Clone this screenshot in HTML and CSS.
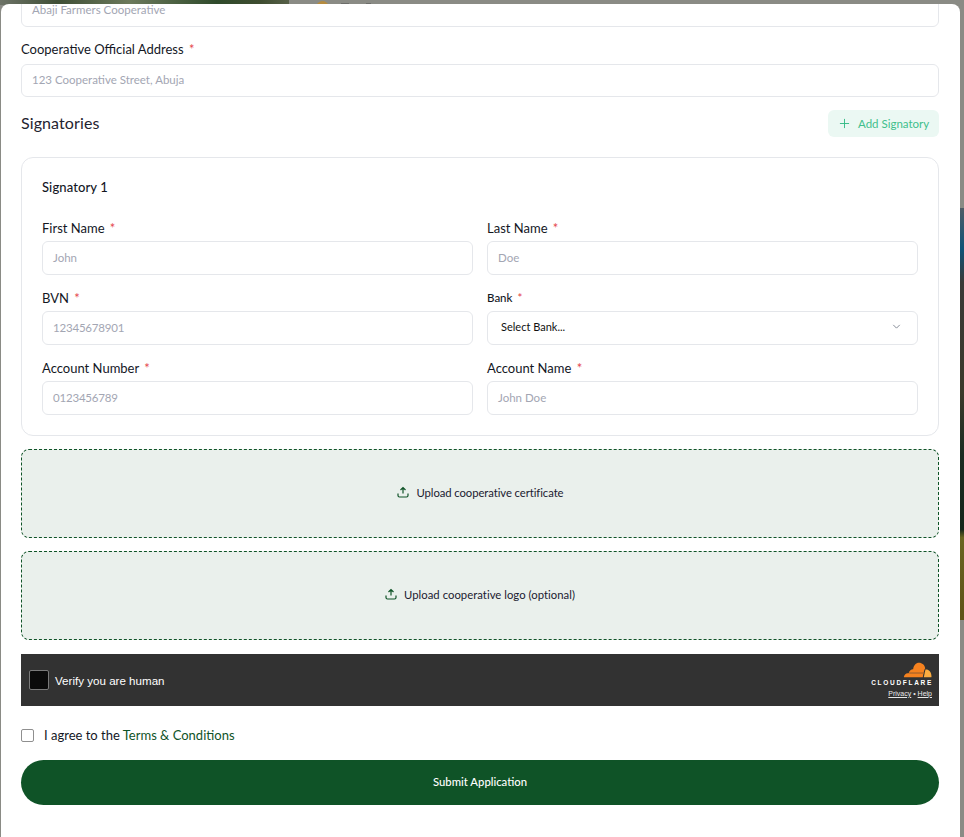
FILE: index.html
```html
<!DOCTYPE html>
<html lang="en">
<head>
<meta charset="utf-8">
<title>Cooperative Application</title>
<link rel="stylesheet" href="styles.css">
</head>
<body>
<div class="backdrop">
  <div class="photo"></div>
  <div class="user-dot"></div>
  <div class="user-name"></div>
  <div class="user-name second"></div>
  <div class="side-photo"></div>
</div>
<main class="modal">
  <div class="field cut">
    <div class="input">Abaji Farmers Cooperative</div>
  </div>
  <div class="field">
    <label class="label">Cooperative Official Address <span class="req">*</span></label>
    <div class="input tall">123 Cooperative Street, Abuja</div>
  </div>
  <div class="section-head">
    <h2 class="section-title">Signatories</h2>
    <button class="add-btn" type="button">
      <svg class="add-icon" viewBox="0 0 24 24" aria-hidden="true"><path d="M12 2v20M2 12h20"/></svg>
      Add Signatory
    </button>
  </div>
  <section class="card">
    <h3 class="card-title">Signatory 1</h3>
    <div class="grid">
      <div class="cell"><label class="label">First Name <span class="req">*</span></label><div class="input box">John</div></div>
      <div class="cell"><label class="label">Last Name <span class="req">*</span></label><div class="input box">Doe</div></div>
      <div class="cell"><label class="label">BVN <span class="req">*</span></label><div class="input box num">12345678901</div></div>
      <div class="cell"><label class="label small">Bank <span class="req">*</span></label>
        <div class="input box select"><span>Select Bank...</span>
          <svg class="chev" viewBox="0 0 24 24" aria-hidden="true"><path d="M6 9l6 6 6-6"/></svg>
        </div>
      </div>
      <div class="cell"><label class="label">Account Number <span class="req">*</span></label><div class="input box num">0123456789</div></div>
      <div class="cell"><label class="label">Account Name <span class="req">*</span></label><div class="input box">John Doe</div></div>
    </div>
  </section>
  <div class="upload">
    <svg class="up-icon" viewBox="0 0 24 24" aria-hidden="true"><path d="M12 15V3M7 8l5-5 5 5M2 15v4a3 3 0 0 0 3 3h14a3 3 0 0 0 3-3v-4"/></svg>
    Upload cooperative certificate
  </div>
  <div class="upload wide">
    <svg class="up-icon" viewBox="0 0 24 24" aria-hidden="true"><path d="M12 15V3M7 8l5-5 5 5M2 15v4a3 3 0 0 0 3 3h14a3 3 0 0 0 3-3v-4"/></svg>
    Upload cooperative logo (optional)
  </div>
  <div class="captcha">
    <div class="cap-left"><span class="cap-box"></span><span class="cap-text">Verify you are human</span></div>
    <div class="cap-right">
      <svg class="cf-logo" viewBox="0 0 60 32" aria-hidden="true">
        <path fill="#f6821f" d="M41 31H3c-1 0-1.500-.5-1-1.500 1-4 4-7 7.500-7 .8 0 1.500.1 2.200.4C13 17 18 14 21 14.500 22 6 27 1 33 1c6.500 0 12 4.800 13 11.500-2.500 3-4 12.500-5 18.500z"/>
        <path fill="#fbad41" d="M46.500 15c6-.8 12.500 4 12.500 15 0 .6-.3 1-.6 1H43c1.500-5 2-11 3.500-16z"/>
        <path fill="#a5622a" d="M13 21h31v2.500H13z"/>
      </svg>
      <span class="cf-word">CLOUDFLARE</span>
      <span class="cf-links"><a class="cf-link">Privacy</a> • <a class="cf-link">Help</a></span>
    </div>
  </div>
  <label class="agree">
    <span class="check"></span>
    <span>I agree to the <span class="terms">Terms &amp; Conditions</span></span>
  </label>
  <button class="submit" type="button">Submit Application</button>
</main>
</body>
</html>
```
FILE: styles.css
```css
* { box-sizing: border-box; }
html, body { margin: 0; height: 837px; overflow: hidden; }
body {
  font-family: "Lato", "Liberation Sans", sans-serif;
  background: #8a8b85;
  position: relative;
  color: #111;
  padding: 4px 4px 0 1px;
}
.backdrop { position: absolute; inset: 0; overflow: hidden; background: #8a8b85; }
.photo {
  position: absolute; left: 0; top: 0; width: 289px; height: 5px;
  background: linear-gradient(90deg, #6d7367, #3f4f36 20%, #6c7a5c 45%, #2f4a2b 75%, #3e4c30 90%, #566048);
}
.user-dot { position: absolute; left: 316px; top: 1px; width: 13px; height: 13px; border-radius: 50%; background: #b58b3f; }
.user-name { position: absolute; left: 341px; top: 3px; width: 8px; height: 2px; background: #6c6d6a; }
.user-name.second { left: 366px; width: 5px; }
.side-photo {
  position: absolute; right: 0; top: 208px; width: 4px; height: 412px;
  background: linear-gradient(#4f5c66, #0f5478 10%, #3a3a38 18%, #3b3a2b 45%, #1b2c22 60%, #15261b 78%, #6a6521 80%, #5f5418 98%);
}
.modal {
  position: relative;
  height: 833px;
  background: #fff;
  border-radius: 8px 8px 0 0;
  padding: 0 21px 0 20px;
  overflow: hidden;
}
.field.cut { margin-top: -11px; }
.label { display: block; font-size: 13px; line-height: 18px; color: #14171f; }
.label.small { font-size: 11.500px; font-weight: 500; }
.req { color: #e5484d; margin-left: 2px; }
.input {
  height: 34px;
  border: 1px solid #e5e7eb;
  border-radius: 6px;
  background: #fff;
  padding: 0 10px 1px;
  display: flex;
  align-items: center;
  font-size: 11.500px;
  color: #a3a6b3;
}
.field + .field { margin-top: 13px; }
.field .label { margin-bottom: 6px; }
.input.tall { height: 33px; padding-bottom: 3px; }
.section-head { display: flex; justify-content: space-between; align-items: center; margin-top: 13px; height: 27px; }
.section-title { margin: 0 0 2px; font-size: 16px; font-weight: 400; color: #1f2430; letter-spacing: 0.1px; }
.add-btn {
  height: 27px; width: 111px;
  border: 0; border-radius: 6px;
  background: #ebf8f3;
  color: #3fbf8c;
  font: inherit; font-size: 11.500px;
  display: flex; align-items: center; gap: 8px;
  padding: 0 0 0 11px;
}
.add-icon { width: 11px; height: 11px; fill: none; stroke: #2fb983; stroke-width: 2; }
.card {
  margin-top: 20px;
  height: 279px;
  border: 1px solid #e5e7eb;
  border-radius: 12px;
  padding: 20px;
}
.card-title { margin: 0; font-size: 13px; line-height: 18px; font-weight: 500; color: #14171f; letter-spacing: 0.1px; }
.grid { display: grid; grid-template-columns: 1fr 1fr; column-gap: 14px; row-gap: 14px; margin-top: 23px; }
.cell .label { margin-bottom: 4px; }
.box { height: 34px; padding: 0 10px 1px; }
.num { letter-spacing: -0.2px; }
.select { color: #111; padding: 0 13px 3px; justify-content: space-between; font-size: 11px; }
.chev { width: 13px; height: 13px; fill: none; stroke: #6b7280; stroke-width: 1.500; margin-right: 1px; }
.upload {
  height: 89px;
  margin-top: 13px;
  background: #eaf0ec;
  border: 1px dashed #0f5327;
  border-radius: 8px;
  display: flex; align-items: center; justify-content: center; gap: 8px;
  font-size: 11.300px;
  color: #1a2030;
  letter-spacing: -0.08px;
  padding-bottom: 3px;
}
.upload.wide { letter-spacing: 0.03px; gap: 7px; }
.up-icon { width: 12px; height: 12px; fill: none; stroke: #0f5327; stroke-width: 2.400; }
.captcha {
  margin-top: 14px;
  height: 52px;
  background: #323232;
  display: flex; justify-content: space-between; align-items: center;
  padding: 0 7px 0 8px;
}
.cap-left { display: flex; align-items: center; gap: 6px; }
.cap-box { width: 20px; height: 20px; background: #0a0a0a; border: 1px solid #7a7a7a; border-radius: 2px; }
.cap-text { font-family: "Liberation Sans", sans-serif; font-size: 11.600px; color: #fff; }
.cap-right { display: flex; flex-direction: column; align-items: flex-end; }
.cf-logo { width: 29px; height: 16px; display: block; }
.cf-word { font-family: "Liberation Sans", sans-serif; font-size: 6.500px; font-weight: 700; letter-spacing: 1.700px; color: #fff; line-height: 8px; margin-top: 1px; margin-right: -1px; }
.cf-links { font-family: "Liberation Sans", sans-serif; font-size: 7px; color: #e8e8e8; line-height: 10px; margin-top: 2px; }
.cf-link { color: #e8e8e8; text-decoration: underline; }
.agree { display: flex; align-items: center; gap: 10px; margin-top: 20px; height: 18px; font-size: 13px; color: #14171f; }
.check { width: 13px; height: 13px; border: 1px solid #8f8f8f; border-radius: 2px; background: #fff; }
.terms { color: #0f5327; }
.submit {
  display: block;
  width: 100%; height: 45px;
  margin-top: 16px;
  border: 0; border-radius: 23px;
  background: #0f5327;
  color: #fff;
  font: inherit; font-size: 11.300px; font-weight: 500;
  padding-bottom: 4px;
}
```
